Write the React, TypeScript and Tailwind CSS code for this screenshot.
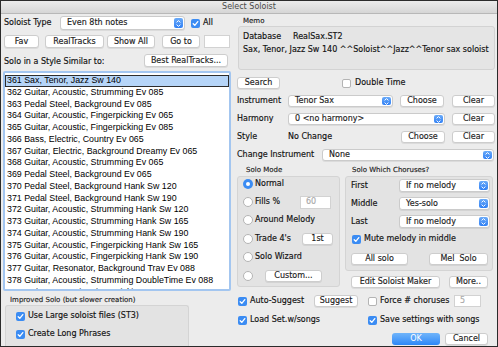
import React from "react";

const F = "font-['DejaVu_Sans',sans-serif]";

function Check({ on }: { on: boolean }) {
  return on ? (
    <div className="w-[9px] h-[9px] rounded-[2px] bg-[#3b8cf3] flex items-center justify-center shrink-0">
      <svg width="7" height="7" viewBox="0 0 7 7">
        <path d="M1.2 3.7 L2.8 5.3 L5.8 1.6" stroke="white" strokeWidth="1.3" fill="none" strokeLinecap="round" strokeLinejoin="round" />
      </svg>
    </div>
  ) : (
    <div className="w-[9px] h-[9px] rounded-[2px] bg-white border border-[#b4b4b4] shrink-0" />
  );
}

function Radio({ on }: { on: boolean }) {
  return on ? (
    <div className="w-[10px] h-[10px] rounded-full bg-[#3b8cf3] flex items-center justify-center shrink-0">
      <div className="w-[4px] h-[4px] rounded-full bg-white" />
    </div>
  ) : (
    <div className="w-[10px] h-[10px] rounded-full bg-white border border-[#b4b4b4] shrink-0" />
  );
}

function Btn({ cls, children }: { cls: string; children: React.ReactNode }) {
  return (
    <div
      className={`${cls} flex items-center justify-center bg-white rounded-[3px] border border-[#cdcdcd] shadow-[0_1px_0_rgba(0,0,0,0.07)] text-[8px] leading-none text-[#1c1c1c] shrink-0`}
    >
      {children}
    </div>
  );
}

function Stepper() {
  return (
    <div className="ml-auto self-stretch my-[1px] mr-[1px] w-[9px] rounded-[2px] bg-gradient-to-b from-[#6aaaf8] to-[#2f80f5] flex items-center justify-center">
      <svg width="7" height="9" viewBox="0 0 7 9">
        <path d="M1.6 3.4 L3.5 1.6 L5.4 3.4" stroke="white" strokeWidth="1" fill="none" />
        <path d="M1.6 5.6 L3.5 7.4 L5.4 5.6" stroke="white" strokeWidth="1" fill="none" />
      </svg>
    </div>
  );
}

function Select({ cls, text }: { cls: string; text: string }) {
  return (
    <div
      className={`${cls} flex items-center bg-white rounded-[3px] border border-[#cbcbcb] shadow-[0_1px_0_rgba(0,0,0,0.07)] shrink-0`}
    >
      <span className="pl-[6px] text-[8px] leading-none text-[#1c1c1c] whitespace-nowrap">{text}</span>
      <Stepper />
    </div>
  );
}

function Field({ cls, text }: { cls: string; text?: string }) {
  return (
    <div className={`${cls} flex items-center bg-white border border-[#d2d2d2] text-[8px] leading-none text-[#a9a9a9] pl-[5px] shrink-0`}>
      {text}
    </div>
  );
}

const items = [
  "361 Sax, Tenor, Jazz Sw 140",
  "362 Guitar, Acoustic, Strumming Ev 085",
  "363 Pedal Steel, Background Ev 085",
  "364 Guitar, Acoustic, Fingerpicking Ev 065",
  "365 Guitar, Acoustic, Fingerpicking Ev 085",
  "366 Bass, Electric, Country Ev 065",
  "367 Guitar, Electric, Background Dreamy Ev 065",
  "368 Guitar, Acoustic, Strumming Ev 065",
  "369 Pedal Steel, Background Ev 065",
  "370 Pedal Steel, Background Hank Sw 120",
  "371 Pedal Steel, Background Hank Sw 190",
  "372 Guitar, Acoustic, Strumming Hank Sw 120",
  "373 Guitar, Acoustic, Strumming Hank Sw 165",
  "374 Guitar, Acoustic, Strumming Hank Sw 190",
  "375 Guitar, Acoustic, Fingerpicking Hank Sw 165",
  "376 Guitar, Acoustic, Fingerpicking Hank Sw 190",
  "377 Guitar, Resonator, Background Trav Ev 088",
  "378 Guitar, Acoustic, Strumming DoubleTime Ev 088",
  "379 Guitar, Acoustic, Fingerpicking Trav Ev 088",
];

export default function App() {
  return (
    <div className={`${F} w-[498px] h-[347px] bg-[#ececec] border border-[#2b2b2b] flex flex-col overflow-hidden text-[#111] [-webkit-text-stroke:0.15px]`}>
      {/* title bar */}
      <div className="h-[13px] shrink-0 bg-gradient-to-b from-[#ebebeb] to-[#d6d6d6] border-b border-[#b8b8b8] flex items-center justify-center text-[8px] leading-none text-[#4a4a4a] [-webkit-text-stroke:0px]">
        Select Soloist
      </div>
      <div className="flex flex-1 min-h-0">
        {/* left column */}
        <div className="w-[229px] ml-[2px] flex flex-col shrink-0">
          <div className="mt-[2px] h-[14px] flex items-center">
            <span className="ml-[1px] w-[56px] text-[8px] leading-none">Soloist Type</span>
            <Select cls="w-[125px] h-[14px]" text="Even 8th notes" />
            <div className="ml-[6px]"><Check on /></div>
            <span className="ml-[3px] text-[8px] leading-none">All</span>
          </div>
          <div className="mt-[5px] h-[13px] flex items-center">
            <Btn cls="ml-[1px] w-[35px] h-[13px]">Fav</Btn>
            <Btn cls="ml-[6px] w-[59px] h-[13px]">RealTracks</Btn>
            <Btn cls="ml-[3px] w-[48px] h-[13px]">Show All</Btn>
            <Btn cls="ml-[7px] w-[38px] h-[13px]">Go to</Btn>
            <Field cls="ml-[4px] w-[26px] h-[13px]" />
          </div>
          <div className="mt-[6px] h-[13px] flex items-center">
            <span className="ml-[1px] mt-[3px] text-[8px] leading-none">Solo in a Style Similar to:</span>
            <Btn cls="ml-auto mr-[4px] w-[84px] h-[13px]">Best RealTracks...</Btn>
          </div>
          <div className="mt-[4px] h-[220px] w-[228px] bg-white border-2 border-[#a3c6f0] rounded-[2px] overflow-hidden pt-[2px] font-['Liberation_Sans',Arial,sans-serif] text-[8.85px] text-black [-webkit-text-stroke:0px]">
            {items.map((t, i) => (
              <div
                key={t}
                className={
                  i === 0
                    ? "h-[11.75px] leading-[11.75px] pl-[1px] bg-[#b6d5f8] border border-[#2d2d2d] whitespace-nowrap flex items-center"
                    : "h-[11.75px] leading-[11.75px] pl-[2px] whitespace-nowrap"
                }
              >
                {t}
              </div>
            ))}
          </div>
          <div className="mt-[5px] h-[9px] ml-[7px] text-[7px] leading-[9px] text-[#222]">Improved Solo (but slower creation)</div>
          <div className="ml-[2px] w-[184px] flex-1 bg-[#e3e3e3] border border-[#d4d4d4] border-b-0 rounded-t-[3px] flex flex-col">
            <div className="mt-[5px] h-[10px] flex items-center">
              <div className="ml-[10px]"><Check on /></div>
              <span className="ml-[3px] text-[8px] leading-none">Use Large soloist files (ST3)</span>
            </div>
            <div className="mt-[8px] h-[10px] flex items-center">
              <div className="ml-[10px]"><Check on /></div>
              <span className="ml-[3px] text-[8px] leading-none">Create Long Phrases</span>
            </div>
          </div>
        </div>

        {/* right column */}
        <div className="w-[258px] ml-[5px] flex flex-col shrink-0">
          <div className="mt-[3px] h-[9px] ml-[6px] text-[7px] leading-[9px] text-[#222]">Memo</div>
          <div className="ml-[1px] w-[257px] h-[44px] bg-[#e5e5e5] border border-[#d3d3d3] rounded-[3px] pl-[4px] pt-[3px] text-[8px] leading-[13px] whitespace-nowrap">
            <div className="flex">
              <span className="w-[50px]">Database</span>
              <span>RealSax.ST2</span>
            </div>
            <div>Sax, Tenor, Jazz Sw 140 ^^Soloist^^Jazz^^Tenor sax soloist</div>
          </div>
          <div className="mt-[7px] h-[12px] flex items-center">
            <Btn cls="w-[43px] h-[12px]">Search</Btn>
            <div className="ml-[62px]"><Check on={false} /></div>
            <span className="ml-[4px] text-[8px] leading-none">Double Time</span>
          </div>
          <div className="mt-[6px] h-[12px] flex items-center">
            <span className="w-[51px] text-[8px] leading-none">Instrument</span>
            <Select cls="w-[105px] h-[12px]" text="Tenor Sax" />
            <Btn cls="ml-[7px] w-[44px] h-[12px]">Choose</Btn>
            <Btn cls="ml-[8px] w-[43px] h-[12px]">Clear</Btn>
          </div>
          <div className="mt-[6px] h-[12px] flex items-center">
            <span className="w-[51px] text-[8px] leading-none">Harmony</span>
            <Select cls="w-[157px] h-[12px]" text="0 <no harmony>" />
            <Btn cls="ml-[7px] w-[43px] h-[12px]">Clear</Btn>
          </div>
          <div className="mt-[6px] h-[12px] flex items-center">
            <span className="w-[51px] text-[8px] leading-none">Style</span>
            <span className="w-[113px] text-[8px] leading-none">No Change</span>
            <Btn cls="w-[44px] h-[12px]">Choose</Btn>
            <Btn cls="ml-[7px] w-[43px] h-[12px]">Clear</Btn>
          </div>
          <div className="mt-[6px] h-[12px] flex items-center">
            <span className="w-[85px] text-[8px] leading-none">Change Instrument</span>
            <Select cls="w-[172px] h-[12px]" text="None" />
          </div>
          <div className="mt-[5px] h-[9px] flex text-[7px] leading-[9px] text-[#222]">
            <span className="ml-[9px] w-[106px]">Solo Mode</span>
            <span>Solo Which Choruses?</span>
          </div>
          <div className="mt-[1px] flex">
            {/* Solo Mode */}
            <div className="w-[103px] h-[111px] bg-[#e3e3e3] border border-[#d4d4d4] rounded-[3px] flex flex-col pl-[5px] text-[8px] leading-none">
              <div className="mt-[1px] h-[12px] flex items-center">
                <Radio on />
                <span className="ml-[2px]">Normal</span>
              </div>
              <div className="mt-[6px] h-[12px] flex items-center">
                <Radio on={false} />
                <span className="ml-[2px] w-[45px]">Fills %</span>
                <Field cls="w-[31px] h-[13px]" text="60" />
              </div>
              <div className="mt-[6px] h-[12px] flex items-center">
                <Radio on={false} />
                <span className="ml-[2px]">Around Melody</span>
              </div>
              <div className="mt-[7px] h-[12px] flex items-center">
                <Radio on={false} />
                <span className="ml-[2px] w-[47px]">Trade 4's</span>
                <Btn cls="w-[31px] h-[12px]">1st</Btn>
              </div>
              <div className="mt-[6px] h-[12px] flex items-center">
                <Radio on={false} />
                <span className="ml-[2px]">Solo Wizard</span>
              </div>
              <div className="mt-[7px] h-[12px] flex items-center">
                <Radio on={false} />
                <Btn cls="ml-[12px] w-[57px] h-[12px]">Custom...</Btn>
              </div>
            </div>
            {/* Choruses */}
            <div className="ml-[5px] flex flex-col">
              <div className="w-[148px] h-[95px] bg-[#e3e3e3] border border-[#d4d4d4] rounded-[3px] flex flex-col pl-[5px] text-[8px] leading-none">
                <div className="mt-[2px] h-[13px] flex items-center">
                  <span className="w-[48px]">First</span>
                  <Select cls="w-[91px] h-[13px]" text="If no melody" />
                </div>
                <div className="mt-[5px] h-[13px] flex items-center">
                  <span className="w-[48px]">Middle</span>
                  <Select cls="w-[91px] h-[13px]" text="Yes-solo" />
                </div>
                <div className="mt-[5px] h-[13px] flex items-center">
                  <span className="w-[48px]">Last</span>
                  <Select cls="w-[91px] h-[13px]" text="If no melody" />
                </div>
                <div className="mt-[5px] h-[12px] flex items-center">
                  <div className="ml-[1px]"><Check on /></div>
                  <span className="ml-[3px]">Mute melody in middle</span>
                </div>
                <div className="mt-[8px] h-[12px] flex items-center">
                  <Btn cls="w-[57px] h-[12px]">All solo</Btn>
                  <Btn cls="ml-[21px] w-[59px] h-[12px]">Mel&nbsp;&nbsp;Solo</Btn>
                </div>
              </div>
              <div className="mt-[5px] h-[12px] flex items-center">
                <Btn cls="ml-[6px] w-[89px] h-[12px]">Edit Soloist Maker</Btn>
                <Btn cls="ml-[9px] w-[39px] h-[12px]">More..</Btn>
              </div>
            </div>
          </div>
          <div className="mt-[7px] h-[12px] flex items-center text-[8px] leading-none">
            <div className="w-[77px] flex items-center">
              <div className="ml-[1px]"><Check on /></div>
              <span className="ml-[3px]">Auto-Suggest</span>
            </div>
            <Btn cls="w-[44px] h-[12px]">Suggest</Btn>
            <div className="ml-[10px] w-[86px] flex items-center">
              <Check on={false} />
              <span className="ml-[3px]">Force # choruses</span>
            </div>
            <Field cls="w-[27px] h-[12px]" text="5" />
          </div>
          <div className="mt-[7px] h-[12px] flex items-center text-[8px] leading-none">
            <div className="w-[131px] flex items-center">
              <div className="ml-[1px]"><Check on /></div>
              <span className="ml-[3px]">Load Set.w/songs</span>
            </div>
            <Check on />
            <span className="ml-[3px]">Save settings with songs</span>
          </div>
          <div className="mt-[7px] h-[12px] flex items-center">
            <div className="ml-[155px] w-[48px] h-[12px] rounded-[3px] bg-gradient-to-b from-[#6fb4fa] to-[#2b87f7] text-white text-[8px] leading-none flex items-center justify-center [-webkit-text-stroke:0px]">
              OK
            </div>
            <Btn cls="ml-[5px] w-[43px] h-[12px]">Cancel</Btn>
          </div>
        </div>
      </div>
    </div>
  );
}
